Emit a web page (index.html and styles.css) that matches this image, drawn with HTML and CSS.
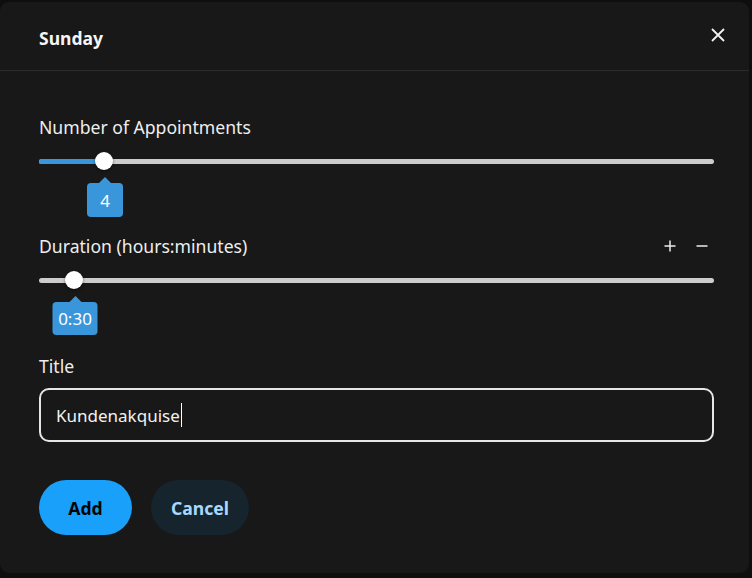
FILE: index.html
```html
<!DOCTYPE html>
<html>
<head>
<meta charset="utf-8">
<link rel="stylesheet" href="styles.css">
</head>
<body>
<div class="dialog">
  <div class="header">
    <h2 class="title">Sunday</h2>
    <button class="close" aria-label="Close">
      <svg width="14" height="14" viewBox="0 0 14 14"><path d="M1 1L13 13M13 1L1 13" stroke="#f2f2f2" stroke-width="1.8" fill="none"/></svg>
    </button>
  </div>
  <div class="content">
    <div class="field">
      <div class="label-row"><span class="label">Number of Appointments</span></div>
      <div class="slider">
        <div class="track"></div>
        <div class="fill" style="width: 65px"></div>
        <div class="thumb" style="left: 65px"></div>
        <div class="bubble" style="left: 65px"><span>4</span></div>
      </div>
    </div>
    <div class="field field-2">
      <div class="label-row">
        <span class="label">Duration (hours:minutes)</span>
        <div class="steppers">
          <button class="step" aria-label="Increase"><svg width="12" height="12" viewBox="0 0 12 12"><path d="M0.5 6H11.5M6 0.5V11.5" stroke="#ececec" stroke-width="1.5"/></svg></button>
          <button class="step" aria-label="Decrease"><svg width="12" height="12" viewBox="0 0 12 12"><path d="M0.5 6H11.5" stroke="#ececec" stroke-width="1.5"/></svg></button>
        </div>
      </div>
      <div class="slider">
        <div class="track"></div>
        <div class="thumb" style="left: 35px"></div>
        <div class="bubble wide" style="left: 35px"><span>0:30</span></div>
      </div>
    </div>
    <div class="field field-3">
      <div class="label-row"><span class="label">Title</span></div>
      <div class="input">Kundenakquise<span class="caret"></span></div>
    </div>
    <div class="actions">
      <button class="btn btn-primary">Add</button>
      <button class="btn btn-secondary">Cancel</button>
    </div>
  </div>
</div>
</body>
</html>
```
FILE: styles.css
```css
* { box-sizing: border-box; }
html, body { margin: 0; padding: 0; }
body {
  background: #0e0e0e;
  width: 752px;
  height: 578px;
  padding-top: 2px;
  font-family: "Noto Sans", "Open Sans", sans-serif;
  color: #f0f0f0;
  overflow: hidden;
}
.dialog {
  width: 749px;
  height: 571px;
  background: #181818;
  border-radius: 9px;
  display: flex;
  flex-direction: column;
}
.header {
  height: 69px;
  border-bottom: 1px solid #2c2c2c;
  display: flex;
  align-items: center;
  justify-content: space-between;
  padding: 0 24px 0 39px;
}
.title {
  margin: 4px 0 0;
  font-size: 17.5px;
  font-weight: 700;
  color: #f5f5f5;
}
.close {
  background: none;
  border: 0;
  padding: 0;
  width: 14px;
  height: 14px;
  display: flex;
  margin-top: -3px;
}
.content {
  padding: 44px 35px 0 39px;
  display: flex;
  flex-direction: column;
}
.label-row {
  height: 24px;
  display: flex;
  align-items: center;
  justify-content: space-between;
}
.label {
  font-size: 17.6px;
  color: #eeeeee;
}
.steppers {
  display: flex;
  gap: 20px;
  padding-right: 6px;
}
.step {
  background: none;
  border: 0;
  padding: 0;
  width: 12px;
  height: 12px;
  display: flex;
}
.slider {
  position: relative;
  height: 66px;
  margin-top: 12px;
}
.track {
  position: absolute;
  left: 0;
  right: 0;
  top: 8px;
  height: 5px;
  border-radius: 3px;
  background: #cccccc;
}
.fill {
  position: absolute;
  left: 0;
  top: 8px;
  height: 5px;
  border-radius: 3px 0 0 3px;
  background: #3996db;
}
.thumb {
  position: absolute;
  top: 1px;
  width: 18px;
  height: 18px;
  margin-left: -9px;
  border-radius: 50%;
  background: #ffffff;
  box-shadow: 0 1px 3px rgba(0,0,0,0.5);
}
.bubble {
  position: absolute;
  top: 32px;
  transform: translateX(-50%);
  margin-left: 1px;
  width: 36px;
  height: 34px;
  border-radius: 4px;
  background: #3996db;
  color: #ffffff;
  font-size: 17px;
  display: flex;
  align-items: center;
  justify-content: center;
}
.bubble.wide { width: 45px; height: 33px; }
.bubble::before {
  content: "";
  position: absolute;
  top: -6px;
  left: 50%;
  margin-left: -6px;
  border-left: 6px solid transparent;
  border-right: 6px solid transparent;
  border-bottom: 6px solid #3996db;
}
.field-2 { margin-top: 17px; }
.field-2 .slider { height: 65px; }
.field-3 { margin-top: 19px; }
.input {
  margin-top: 10px;
  height: 54px;
  border: 2px solid #e6e6e6;
  border-radius: 10px;
  padding: 0 15px;
  display: flex;
  align-items: center;
  font-size: 17px;
  color: #f2f2f2;
}
.caret {
  display: inline-block;
  width: 1px;
  height: 24px;
  background: #ffffff;
  margin-left: 1px;
}
.actions {
  margin-top: 38px;
  display: flex;
  gap: 19px;
}
.btn {
  height: 55px;
  border: 0;
  border-radius: 28px;
  font-family: "Noto Sans", "Open Sans", sans-serif;
  font-size: 17.6px;
  font-weight: 700;
  padding: 0;
}
.btn-primary {
  width: 93px;
  background: #18a0fb;
  color: #050505;
}
.btn-secondary {
  width: 98px;
  background: #16242e;
  color: #a8d8ff;
}
```
